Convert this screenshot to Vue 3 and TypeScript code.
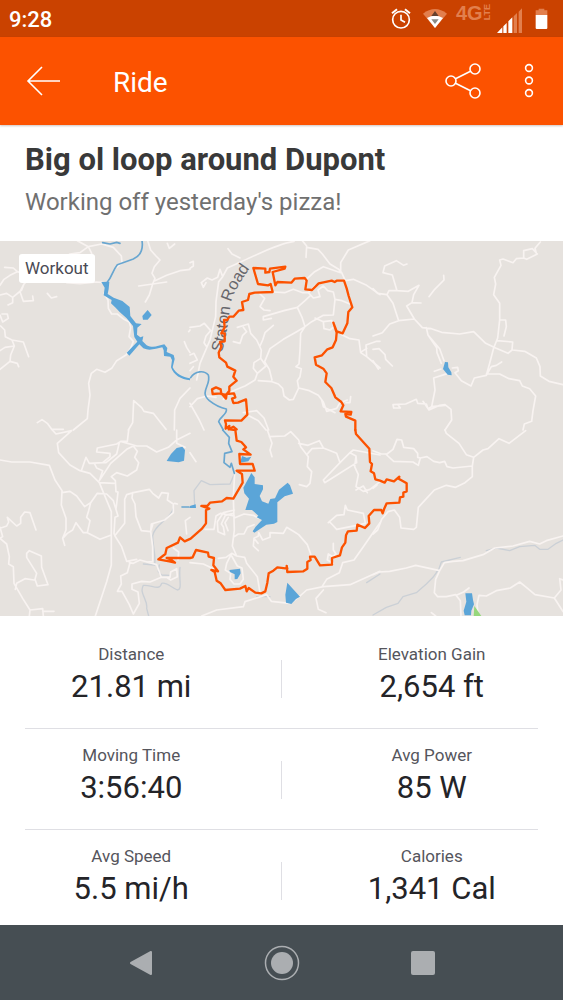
<script setup lang="ts">
interface Stat {
  label: string
  value: string
}

interface MapTile {
  x: number
  y: number
  roads: string
  streams?: string
  rivers?: string
  lakes?: string
}

const statRows: Stat[][] = [
  [
    { label: 'Distance', value: '21.81 mi' },
    { label: 'Elevation Gain', value: '2,654 ft' },
  ],
  [
    { label: 'Moving Time', value: '3:56:40' },
    { label: 'Avg Power', value: '85 W' },
  ],
  [
    { label: 'Avg Speed', value: '5.5 mi/h' },
    { label: 'Calories', value: '1,341 Cal' },
  ],
]

const tiles: MapTile[] = [
  {
    x: 0,
    y: -3,
    roads:
      'M232 2L265 20L305 12L340 22L364 48L366 68L350 82M265 20L240 38L210 42L185 60M265 20L275 40L273 70M200 128L240 131L290 126L312 128M312 160L324 180L325 205L335 222L352 222L372 238L388 246L392 262L387 290L400 304L392 325L378 345L350 362L335 385L315 397L290 388L274 400L266 430L270 465L264 510L262 536L220 570' +
      'M443 2L452 30L468 48L480 60L463 80L456 100L465 115L458 132L416 138M458 132L448 165L436 186M458 132L500 126M465 122L500 106L540 92L570 88M502 10L508 25L524 12' +
      'M14 82L40 84L52 95L30 106L12 118L0 136M52 95L70 100L110 95M0 165L20 160L38 172L38 188L24 195M38 172L65 150L72 132L90 115M72 132L60 155L70 184L100 182L98 168M142 160L154 174L170 170' +
      'M0 225L8 246L25 235L22 222L6 222M2 258L14 270L16 290L36 300L70 306L86 350M36 300L43 318L32 345L30 364L52 370L56 380M43 318L15 322L0 332M30 364L0 388' +
      'M112 548L126 539L142 550L155 568L190 568M385 570L398 548L401 482L425 503L432 514L460 520L480 545L498 568M570 444L540 475L524 510L523 570M570 270L566 275M553 305L560 322L570 338',
    rivers: 'M308 8L330 12L350 7L360 10M426 2C430 28 420 48 400 57L352 74C336 94 336 112 322 126',
    lakes:
      'M304 126L328 125L326 147L323 162L341 173L367 183L389 201L391 228L408 250L425 252L412 263L411 284L421 292L430 289L427 303L440 316C460 326 474 317 493 313L502 324L500 336L521 345L524 357L518 382C527 400 548 413 570 415L570 421C543 419 521 405 513 382L516 360L511 350L492 348L491 331L487 322C468 325 450 334 430 325L418 313L388 347L380 338L412 305L403 291L399 258L380 235L359 216L347 203L333 190L335 180L311 166L314 143ZM427 228L443 210L455 225L443 239L429 239Z',
  },
  {
    x: 570,
    y: -3,
    roads:
      'M312 4C260 12 215 38 160 62L112 84L98 110L86 125L78 185L77 230L60 300L30 370L20 420M114 26L126 42L150 54M0 85L10 78L10 64L0 68M98 110L90 88L83 112L66 120L52 114L34 128L40 142L48 128' +
      'M337 2L350 18L348 52M350 22L384 28L397 42L420 72L446 88L455 98M540 2L475 30L452 68L452 98L400 80L374 95L345 122M455 98L466 122L490 118L530 136L570 164' +
      'M0 262L30 258L43 250L62 272L48 288L42 308L50 320M0 345L12 340L22 360L0 370M0 392L10 380' +
      'M210 162L224 175L210 200L222 210L240 212M250 156L284 158L310 148L338 158L355 158L376 136M355 158L370 174L390 170L384 150L400 138L413 152L430 156L435 178L456 182L480 192M360 168L345 182L322 202L282 212L220 230L220 240L244 235M322 202L336 232L345 260L332 280L330 330L327 372L318 380L334 386L330 410L322 422L326 444L310 478L298 480L282 468L278 445L265 432L246 425L205 422M345 260L320 275L280 298L240 326L224 365L238 388L246 420M345 260L365 245L400 226L430 225L435 178M400 245L425 242L432 260L420 270L402 266L400 245L375 234' +
      'M142 262L175 252L182 280L200 300L214 330L212 355L192 368L190 385L202 400L195 420L165 438L130 452L100 478M212 355L228 378L202 400M250 256L225 278L218 300L210 318M130 305L150 310L158 286L170 275L160 262' +
      'M455 284L480 296L507 300L512 338L530 350L528 315L560 304L570 304M530 350L570 384M515 335L530 325M326 444L358 452L385 466L400 486L410 514L440 505L450 488L472 480M395 480L400 500L435 518M482 470L480 488L468 488' +
      'M0 500L22 476L52 468L78 472M0 490L28 540L42 570M160 518L200 512L222 534L236 570M172 525L205 542L228 570',
    rivers: 'M2 413C15 392 43 390 55 405C65 435 26 455 58 482C78 498 94 504 109 507C113 522 90 530 86 545L100 570',
  },
  {
    x: 1119,
    y: -3,
    roads:
      'M102 72L92 76L70 62L35 78L30 98L58 105L72 152L48 152L42 164L14 160L0 146M72 152L106 154L138 136L122 164L117 188L144 189M42 164L60 190L77 242L50 252L28 278L0 288M117 188L101 198L124 237L77 242M124 237L148 263L175 266L206 277L260 282L302 275L338 310L368 324L405 340L417 330L419 306L372 302M212 106L213 120L185 148L168 170' +
      'M160 263L165 285L200 326L213 362M165 285L191 323L192 338L205 370M184 394L204 387M238 384L254 382L256 392L246 398L265 422L294 438L304 414L340 406L355 380L370 376L386 366M340 406L350 370L362 324L374 294L380 240L380 190L362 164L368 132L364 112L384 76L380 60L390 57L420 68L430 56L452 54L452 32L478 26L493 42L461 58L452 54M490 40L486 25L502 6M382 240L398 240L400 260L393 288M419 330L455 334L490 354L501 380L502 408L528 424L570 434M340 402L380 402L408 416L440 422L448 438L470 446L488 468L480 512L476 544L454 552L450 570' +
      'M225 400L182 414L186 450L176 500L165 506L160 492L134 490L130 478L98 492L60 494L62 504L82 504L75 494M150 484L168 510L200 496L216 494L234 508L236 540L216 570M176 500L216 496M0 328L18 326L36 344L38 358L58 378M0 362L16 387',
    lakes: 'M216 366L225 367L226 382L235 397L236 406L224 404L210 387Z',
  },
  {
    x: 0,
    y: 567,
    roads:
      'M157 0L168 12L215 2L172 40L176 68L210 105L240 122L270 130L298 158L342 160M0 90L35 96L90 96L148 106L165 150L186 182L184 225L198 265L198 300L188 325L194 346M186 188L210 184L230 198L254 230L272 218L266 242L260 262L270 272L262 308L250 308L228 278L218 300L202 310L188 325M272 218L292 190L320 192L340 212L354 258L345 262L342 310L345 318L365 350L380 394L410 388' +
      'M262 308L300 328L332 316M298 158L334 245L334 405L320 455L286 558M244 122L258 82L268 100L308 98L330 80L330 70L290 66L292 54L350 42L362 34L382 34L386 0M308 98L318 98L350 72L358 38M284 102L290 114L308 122L298 152L332 100L380 58L400 48L412 64L404 82L416 98L410 120L382 138L350 128L334 140L346 152L348 185L354 186L350 222L348 236M362 34L410 48L440 48L470 66L505 52L530 30L570 10M530 0L530 40L555 52' +
      'M400 188L380 194L374 208L374 280L346 315M400 188L448 178L458 190L476 204L485 188L505 190L502 210L520 222L520 248L494 270L454 282L452 305L424 302L408 260L405 222L396 204L398 188M524 220L532 222M570 262L556 272L560 312M458 284L452 304L458 350L458 395' +
      'M0 295L20 288L26 276L22 262L50 288L62 280L62 262L74 246L90 248L108 300M0 292L8 320L0 325L20 342L28 380L26 402L40 410L42 460L68 505L90 540L128 536L130 558M128 544L162 544M46 478L50 460L75 446L102 450M80 370L88 362L124 378L125 412L144 464L112 468L105 448L110 430L80 382ZM90 540L88 558' +
      'M388 398L400 400L420 390L470 404L484 442L450 456L425 454L396 462L396 478L414 486L418 520L400 552L388 524L366 484L352 484L364 462L362 438L382 428L390 398M484 442L510 442L512 426L530 416L532 440L512 450M520 354L536 366L534 390M458 395L440 396M512 450L500 442',
    streams: 'M520 235C510 270 464 282 458 318C458 350 468 370 464 405L430 402M478 405L475 425L485 435L510 436M540 412C536 450 548 478 532 480C510 470 500 456 485 460C478 484 455 464 430 466C416 490 445 510 440 535L446 558',
    rivers: 'M546 231L570 231',
    lakes: 'M500 93L513 72L530 54L547 50L555 60L552 92L536 97Z',
  },
  {
    x: 570,
    y: 567,
    roads:
      'M0 68L18 95M232 0L246 40L240 60L246 80M238 20L284 18L302 5L326 30L332 50L355 80L352 110L365 125L360 160L350 170L328 164M326 40L354 46L388 32L400 54L366 56L352 72M400 54L440 70L450 98L400 150L404 158L440 136L500 98L498 78L480 68L450 98M480 68L490 60L570 75M498 78L494 110L505 134L498 170L520 184L540 178L570 155M498 180L520 168L532 188' +
      'M134 130L130 200L133 300L127 348L140 378L164 382L170 400L202 440L210 488M133 258L92 250L78 258L72 298L45 298M133 240L100 248L82 275L84 305L104 314L100 290L94 282L106 256L130 250M115 262L105 278L114 302M133 264L162 252L190 256L205 264M133 320L145 312L162 312L172 292L192 284M140 378L125 370L110 400L106 420L122 430L120 448L132 462L150 462L160 448L156 414L142 408L125 378M125 370L108 382L85 385M0 398L40 402L70 416' +
      'M205 362L190 348L192 325L205 318L206 308L218 330L240 322L240 308L280 310L290 292L310 304L326 314L352 344L362 372L362 386M192 325L204 340M415 278L440 256L462 254L466 226L472 240L520 250L526 280L500 286L440 298L428 285L418 275M430 340L430 360L438 372L428 380L415 372L412 390L430 400' +
      'M35 558L80 540L160 530L165 515L230 494L244 514L300 520L330 498L350 480L400 470L480 464L570 424M400 480L378 505L385 538L408 548M396 470L410 448L448 428L458 398L492 390L520 350L548 310L570 278',
    streams: 'M0 230L14 226L12 182L34 152L60 164L120 162L134 130M530 458L570 432M200 500L240 500',
    rivers: 'M98 0L118 22L116 40L126 65L104 70L102 98L120 112L124 100L133 130',
    lakes:
      'M184 129L194 142L194 162L219 166L219 178L209 198L216 214L235 221L241 207L255 205L267 179L293 158L300 166L309 191L284 199L262 217L262 276L252 281L229 284L193 308L188 304L197 290L216 270L200 262L205 257L186 240L166 240L177 206L163 190L160 173ZM156 78L170 83L184 80L175 94L150 98ZM118 420L150 416L152 430L142 447L134 448L134 433L120 426ZM292 458L330 500L318 507L304 522L288 518L286 494ZM0 228L17 223L18 234L0 234Z',
  },
  {
    x: 1119,
    y: 567,
    roads:
      'M0 62L25 72L42 72L60 58L72 28L86 30L92 52L122 56L134 70L134 82L142 84L136 106L120 96L62 94L38 72M142 84L162 80L182 94L200 98L215 94L222 110L240 114L298 108L302 82L280 74L258 40L220 10L216 0M302 82L330 60L345 56L378 26L408 40L458 2M298 108L298 140L276 158L248 172L220 166L184 180L158 208L136 232L130 292L122 298L84 294L80 262L64 240L45 245L26 268L14 300L0 312' +
      'M0 434L18 426L50 424L100 414L128 406L200 422L214 398L240 394L270 392L330 374L365 354L420 348L470 334L500 342L520 332L570 318M200 422L188 448L184 488L194 500L220 500L248 494L262 512L264 558M250 496L272 486L288 474M316 558L312 524L318 496L340 498L370 482L412 474L440 456L460 472L486 494L544 504L564 480L560 446L570 450M544 504L570 545M175 548L188 558M0 175L12 165',
    streams: 'M190 426L196 422L205 396L262 382M193 424L180 442L160 462L130 488L90 500L75 520L40 532L0 555M340 362L370 354L410 362L440 350L485 346L500 358L525 358L550 340L570 330',
    lakes: 'M277 490L297 490L300 510L303 523L295 542L294 556L275 556L272 542L280 515Z',
  },
]

const routeNorth =
  'M140 568L130 560L116 568L118 558L107 566L108 552L105 541L154 542L172 524L168 478L144 488L130 489L126 476L136 472L132 460L110 462L108 476L94 460L68 462L66 448L78 442L92 448L94 462L108 465L118 452L118 440L140 422L130 410L136 392L112 380L108 368L88 352L86 338L94 320L90 306L104 304L104 280L94 280L104 262L102 240L112 240L118 230L130 230L146 212L160 210L156 186L174 180L178 162L194 158L248 156L242 132L234 136L204 132L190 84L226 86L226 98L238 96L240 86L286 80L284 86L248 96L256 136L262 126L304 128L314 116L344 114L350 122L346 148L366 150L386 130L425 122L434 126L440 122L462 122L470 145L476 168L487 202L475 216L472 250L458 280L440 274L430 248L440 278L438 300L428 322L412 328L396 346L374 352L378 374L400 386L410 400L406 426L424 444L436 472L454 486L460 496L452 514L484 516L482 524L466 522L468 530L496 542L496 570'
const routeSouth =
  'M496 0L498 12L538 56L540 96L546 102L542 124L552 130L556 148L570 152L584 158L590 148L612 154L628 140L626 146L650 160L650 184L640 188L640 200L630 202L628 218L590 220L582 238L578 250L574 240L552 240L536 258L538 280L525 294L502 284L500 302L474 304L468 316L466 338L456 352L450 376L426 384L426 404L390 406L374 380L360 380L362 390L352 396L352 416L340 424L292 426L290 408L292 416L262 412L250 422L236 430L232 458L226 484L214 490L196 488L176 474L170 484L166 468L150 476L106 480L92 460L80 452L74 426L64 420L84 424L70 406L72 384L56 380L54 368L18 360L8 382L0 384L-70 384L-58 388L-45 398L-62 394L-95 388L-74 372L-70 354L-36 338L-30 322L-16 334L2 326L36 296L48 280L48 240L58 236L34 228L52 228L60 218L96 214L110 204L130 206L158 158L156 132L140 122L194 122L188 102L150 102L148 72L182 74L160 58L168 52L154 36L140 32L136 0L120 -2'

const routes = [
  { x: 570, y: -3, d: routeNorth },
  { x: 570, y: 567, d: routeSouth },
]

const place = (p: { x: number; y: number }): string => `translate(${p.x} ${p.y})`
</script>

<template>
  <div class="screen">
    <div class="status-bar">
      <time class="clock">9:28</time>
      <div class="status-icons">
        <svg class="alarm" viewBox="33 0 60 111" aria-label="Alarm">
          <g fill="none" stroke="#fff" stroke-width="5">
            <circle cx="63" cy="59" r="25" />
            <path d="M63 44V60L75 67" />
            <path d="M36 40L51 28M90 40L75 28" stroke-width="6" />
          </g>
        </svg>
        <svg class="wifi" viewBox="129 0 72 111" aria-label="Wi-Fi">
          <path d="M129 41Q165 13 201 41L165 84Z" fill="#e27f4d" />
          <path d="M141 54Q165 41 189 54L165 84Z" fill="#fff" />
          <path d="M154 48L165 33L176 48Z" fill="#66402d" />
          <path d="M154 58H176L165 72Z" fill="#8a8a85" />
        </svg>
        <div class="network">
          <span class="generation">4G</span>
          <span class="lte">LTE</span>
        </div>
        <svg class="signal" viewBox="351 0 75 111" aria-label="Signal strength">
          <path d="M351 99L367 82V99ZM370 79L380 69V99H370ZM385 64L397 52V99H385Z" fill="#fff" />
          <path d="M401 49L411 39V99H401ZM416 35L426 25V99H416Z" fill="#e27f4d" />
        </svg>
        <svg class="battery" viewBox="465 0 39 111" aria-label="Battery">
          <path d="M476 26H493V31H502V45H467V31H476Z" fill="#e27f4d" />
          <path d="M467 45H502V84Q502 87 499 87H470Q467 87 467 84Z" fill="#fff" />
        </svg>
      </div>
    </div>

    <header class="app-bar">
      <button class="icon-button" type="button" aria-label="Back">
        <svg width="36" height="32" viewBox="0 0 36 32">
          <path d="M34 16H2M16 2L2 16L16 30" />
        </svg>
      </button>
      <h1 class="bar-title">Ride</h1>
      <button class="icon-button share" type="button" aria-label="Share">
        <svg width="38" height="38" viewBox="0 0 38 38">
          <circle cx="7" cy="19" r="5" />
          <circle cx="31" cy="7" r="5" />
          <circle cx="31" cy="31" r="5" />
          <path d="M11 17L27 9M11 21L27 29" />
        </svg>
      </button>
      <button class="icon-button" type="button" aria-label="More options">
        <svg width="12" height="36" viewBox="0 0 12 36">
          <circle cx="6" cy="5" r="3.4" />
          <circle cx="6" cy="17.5" r="3.4" />
          <circle cx="6" cy="30" r="3.4" />
        </svg>
      </button>
    </header>

    <main class="content">
      <section class="heading">
        <h2 class="activity-title">Big ol loop around Dupont</h2>
        <p class="description">Working off yesterday's pizza!</p>
      </section>

      <section class="map">
        <svg class="map-canvas" viewBox="0 0 1689 1125" role="img" aria-label="Route map">
          <rect width="1689" height="1125" fill="#e6e2de" />
          <g v-for="(tile, i) in tiles" :key="i" :transform="place(tile)">
            <path v-if="tile.streams" class="stream" :d="tile.streams" />
            <path class="road" :d="tile.roads" />
            <path v-if="tile.rivers" class="river" :d="tile.rivers" />
            <path v-if="tile.lakes" class="lake" :d="tile.lakes" />
          </g>
          <path d="M1423 1095L1444 1125H1421Z" fill="#96d77c" />
          <path id="road-name" d="M664 336C682 290 684 230 693 186Q702 144 760 68" fill="none" />
          <text class="road-label"><textPath href="#road-name">Staton Road</textPath></text>
          <path v-for="(r, i) in routes" :key="i" class="route" :d="r.d" :transform="place(r)" />
        </svg>
        <span class="tag">Workout</span>
      </section>

      <section class="stats" aria-label="Ride statistics">
        <dl v-for="(row, i) in statRows" :key="i" class="stat-row">
          <div v-for="stat in row" :key="stat.label" class="stat">
            <dt>{{ stat.label }}</dt>
            <dd>{{ stat.value }}</dd>
          </div>
        </dl>
      </section>
    </main>

    <nav class="system-nav" aria-label="System">
      <button type="button" aria-label="Back">
        <svg width="24" height="26" viewBox="0 0 24 26">
          <path d="M2 13L22 2V24Z" stroke="#abaeb1" stroke-width="2" stroke-linejoin="round" />
        </svg>
      </button>
      <button type="button" aria-label="Home">
        <svg width="36" height="36" viewBox="0 0 36 36">
          <circle cx="18" cy="18" r="11" />
          <circle cx="18" cy="18" r="16.5" fill="none" stroke="#abaeb1" stroke-width="1.5" />
        </svg>
      </button>
      <button type="button" aria-label="Recent apps">
        <svg width="24" height="24" viewBox="0 0 24 24">
          <rect width="24" height="24" rx="2" />
        </svg>
      </button>
    </nav>
  </div>
</template>

<style>
body {
  margin: 0;
  background: #fff;
}
</style>

<style scoped>
.screen {
  display: flex;
  flex-direction: column;
  min-height: 100vh;
  font-family: Roboto, 'Liberation Sans', sans-serif;
  color: #242428;
}

h1,
h2,
p,
dl,
dd {
  margin: 0;
}

button {
  padding: 0;
  border: 0;
  background: none;
  cursor: pointer;
}

svg {
  display: block;
}

.status-bar {
  display: flex;
  justify-content: space-between;
  align-items: center;
  height: 37px;
  padding: 0 15px 0 9px;
  background: #ca4200;
}

.clock {
  padding-top: 2px;
  font-size: 22px;
  font-weight: 500;
  line-height: 24px;
  color: #fff;
}

.status-icons {
  display: flex;
}

.status-icons svg {
  height: 37px;
}

.alarm {
  width: 20px;
  margin-right: 12px;
}

.wifi {
  width: 24px;
  margin-right: 9px;
}

.network {
  display: flex;
  align-items: flex-start;
  width: 36px;
  height: 32px;
  padding-top: 4px;
  margin-right: 5px;
  font-family: 'Liberation Sans', sans-serif;
  font-weight: 700;
  color: #e27f4d;
}

.generation {
  font-size: 20px;
  line-height: 18px;
}

.lte {
  font-size: 9px;
  line-height: 8px;
  writing-mode: sideways-lr;
}

.signal {
  width: 25px;
  margin-right: 13px;
}

.battery {
  width: 13px;
}

.app-bar {
  position: relative;
  display: flex;
  align-items: center;
  height: 88px;
  padding: 0 28px 0 26px;
  background: #fc5200;
  box-shadow: 0 1px 2px rgba(60, 20, 0, 0.25);
}

.icon-button svg {
  fill: none;
  stroke: #fff;
  stroke-width: 1.6;
}

.bar-title {
  flex: 1;
  padding: 3px 0 0 51px;
  font-size: 28px;
  font-weight: 400;
  line-height: 32px;
  color: #fff;
}

.share {
  margin-right: 41px;
}

.content {
  flex: 1;
}

.heading {
  padding: 17px 25px 24px;
}

.activity-title {
  font-size: 31px;
  font-weight: 700;
  line-height: 36px;
  color: #393939;
}

.description {
  padding-top: 9px;
  font-size: 24px;
  line-height: 30px;
  color: #707070;
}

.map {
  position: relative;
}

.map-canvas {
  width: 100%;
  height: auto;
}

.road,
.river,
.stream,
.route {
  fill: none;
  stroke-linejoin: round;
  stroke-linecap: round;
}

.road {
  stroke: #f8f3f1;
  stroke-width: 5;
}

.river {
  stroke: #68a6d0;
  stroke-width: 5;
}

.stream {
  stroke: #cbd0d6;
  stroke-width: 4;
}

.lake {
  fill: #5ba5d8;
}

.route {
  stroke: #fc5200;
  stroke-width: 7;
}

.road-label {
  font-family: 'Liberation Sans', sans-serif;
  font-size: 49px;
  fill: #66666b;
}

.tag {
  position: absolute;
  top: 13px;
  left: 19px;
  padding: 0 6px;
  border-radius: 3px;
  background: #fff;
  font-size: 17px;
  line-height: 29px;
  color: #4a4a54;
}

.stats {
  padding: 12px 25px 0;
}

.stat-row {
  position: relative;
  display: grid;
  grid-template-columns: 1fr 1fr;
  padding: 16px 0 22px;
  border-bottom: 1px solid #dfdfe4;
  text-align: center;
}

.stat-row:last-child {
  padding-bottom: 17px;
  border-bottom: 0;
}

.stat-row::after {
  content: '';
  position: absolute;
  top: 32px;
  left: calc(50% - 1px);
  width: 1px;
  height: 38px;
  background: #dfdfe4;
}

.stat:first-child {
  padding-right: 44px;
}

.stat:last-child {
  padding-left: 44px;
}

dt {
  padding-bottom: 4px;
  font-size: 17px;
  line-height: 20px;
  color: #55555c;
}

dd {
  font-size: 31px;
  line-height: 38px;
}

.system-nav {
  display: grid;
  grid-template-columns: repeat(3, 141px);
  justify-content: center;
  height: 75px;
  background: #464e53;
}

.system-nav button {
  display: flex;
  align-items: center;
  justify-content: center;
}

.system-nav svg {
  fill: #abaeb1;
}
</style>
